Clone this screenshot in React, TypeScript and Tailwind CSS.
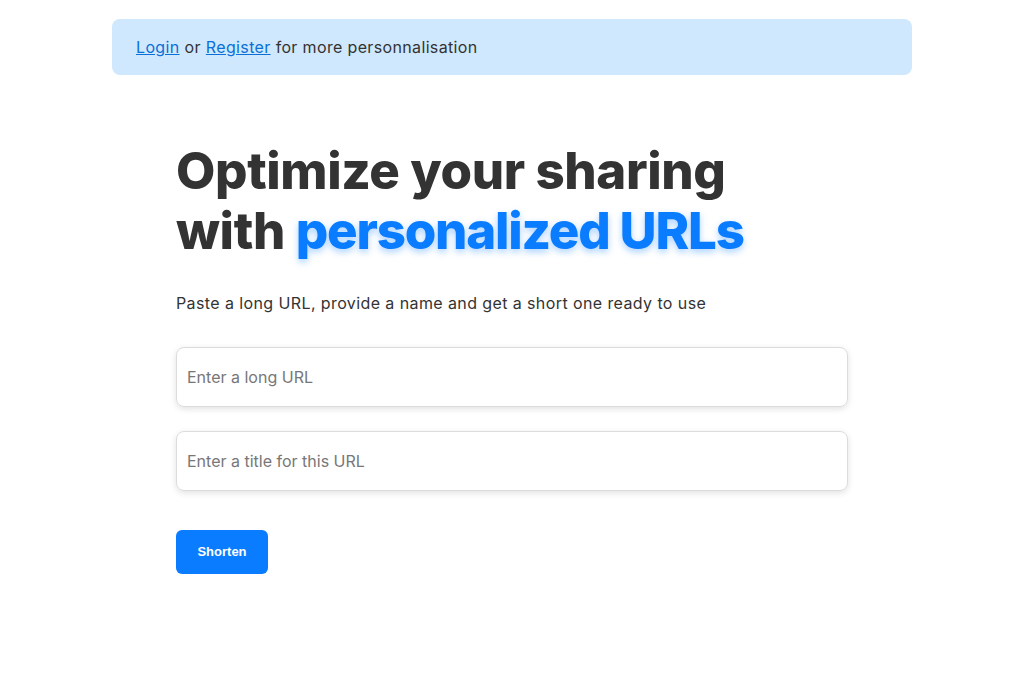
export default function App() {
  return (
    <div className="min-h-screen bg-white pr-[2px] font-['Inter',sans-serif] text-[#333]">
      <div className="mx-auto w-[800px] pt-[19px]">
        <div className="flex h-[56px] items-center rounded-lg bg-[#cfe8fd] px-6 text-[16px] tracking-[0.35px] text-[#333]">
          <a href="#" className="text-[#0a6fd8] underline">
            Login
          </a>
          <span className="mx-[5px]">or</span>
          <a href="#" className="text-[#0a6fd8] underline">
            Register
          </a>
          <span className="ml-[5px]">for more personnalisation</span>
        </div>

        <main className="mx-auto mt-[66px] w-[672px]">
          <h1 className="text-[51px] font-extrabold leading-[60px] tracking-[-0.4px] text-[#333]">
            Optimize your sharing
            <br />
            with{" "}
            <span className="tracking-[-1.2px] text-[#0a7cff] [text-shadow:0_3px_7px_rgba(10,124,255,0.35)]">
              personalized URLs
            </span>
          </h1>

          <p className="mt-[30px] text-[16px] tracking-[0.4px] text-[#333]">
            Paste a long URL, provide a name and get a short one ready to use
          </p>

          <form className="mt-[32px] flex flex-col gap-6" onSubmit={(e) => e.preventDefault()}>
            <input
              className="h-[60px] w-full rounded-lg border border-[#dcdcdc] px-[10px] text-[16px] shadow-[0_2px_6px_rgba(0,0,0,0.12)] outline-none placeholder:text-[#777]"
              placeholder="Enter a long URL"
            />
            <input
              className="h-[60px] w-full rounded-lg border border-[#dcdcdc] px-[10px] text-[16px] shadow-[0_2px_6px_rgba(0,0,0,0.12)] outline-none placeholder:text-[#777]"
              placeholder="Enter a title for this URL"
            />
            <div className="mt-[15px]">
              <button
                type="submit"
                className="h-[44px] w-[92px] rounded-md bg-[#0a7cff] font-['Liberation_Sans',sans-serif] text-[13px] font-bold text-white"
              >
                Shorten
              </button>
            </div>
          </form>
        </main>
      </div>
    </div>
  );
}
